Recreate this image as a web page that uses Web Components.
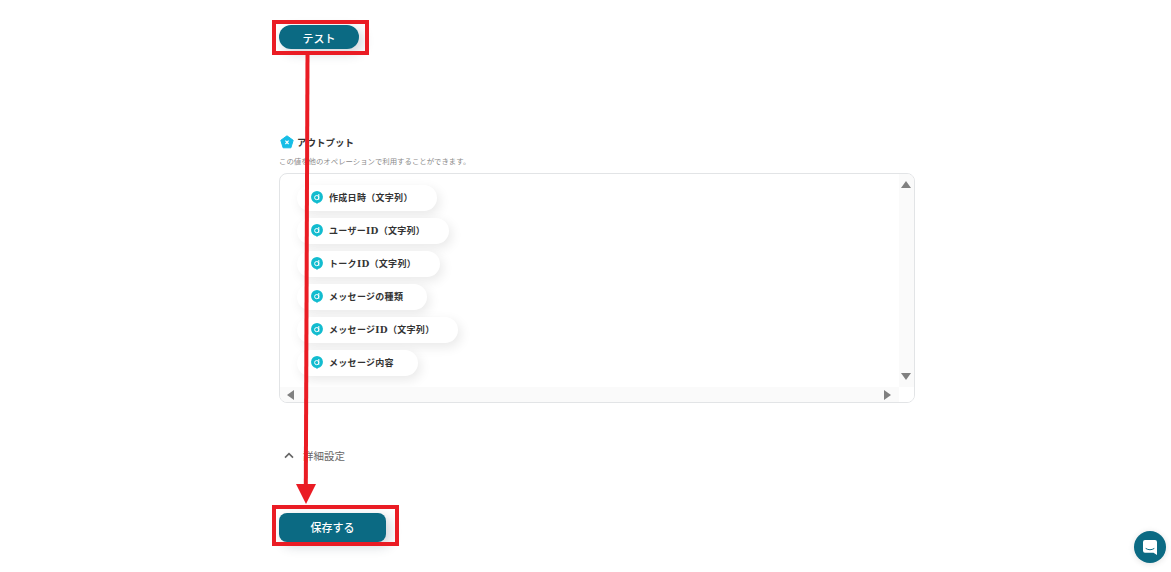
<!DOCTYPE html>
<html lang="ja">
<head>
<meta charset="utf-8">
<title>アウトプット</title>
<style>
    html, body { margin: 0; height: 100%; background: #fff; }
    body { font-family: "Noto Sans CJK JP", "Noto Sans", sans-serif; overflow: hidden; }
</style>
</head>
<body>
<flow-page>
    <action-button shape="pill" style="--w:80px;--h:24px;--fs:11px;--pt:2px;--pb:0px;font-weight:500">テスト</action-button>
    <output-section>
        <output-chip>作成日時（文字列）</output-chip>
        <output-chip>ユーザーID（文字列）</output-chip>
        <output-chip>トークID（文字列）</output-chip>
        <output-chip>メッセージの種類</output-chip>
        <output-chip>メッセージID（文字列）</output-chip>
        <output-chip>メッセージ内容</output-chip>
    </output-section>
    <detail-toggle>詳細設定</detail-toggle>
    <action-button style="--w:107px;--h:29px;--fs:11px;--pt:0px;--pb:2px;font-weight:500">保存する</action-button>
</flow-page>
<red-annotation></red-annotation>
<chat-launcher></chat-launcher>

<script>
// Boton principal (pill o rectangular)
class ActionButton extends HTMLElement {
    constructor() {
        super();
        this.attachShadow({ mode: 'open' }).innerHTML = `
            <style>
                :host { display: block; width: var(--w); }
                button {
                    display: flex; align-items: center; justify-content: center;
                    box-sizing: border-box; width: 100%; height: var(--h);
                    padding: var(--pt) 0 var(--pb); border: 0;
                    border-radius: 8px; background: #0b6a83; color: #fff;
                    font: inherit; font-size: var(--fs);
                    box-shadow: 4px 4px 12px rgba(40, 60, 80, .22);
                }
                :host([shape="pill"]) button { border-radius: 12px; }
            </style>
            <button><slot></slot></button>
        `;
    }
}

// Contenedor de la pagina
class FlowPage extends HTMLElement {
    constructor() {
        super();
        this.attachShadow({ mode: 'open' }).innerHTML = `
            <style>
                :host {
                    display: flex; flex-direction: column;
                    width: 636px; margin-left: 279px; padding-top: 25px;
                }
                ::slotted(output-section) { margin-top: 85px; }
                ::slotted(detail-toggle) { margin-top: 43px; }
                ::slotted(action-button:last-child) { margin-top: 49px; }
            </style>
            <slot></slot>
        `;
    }
}

// Seccion de salida con titulo y caja con scroll
class OutputSection extends HTMLElement {
    constructor() {
        super();
        this.attachShadow({ mode: 'open' }).innerHTML = `
            <style>
                :host { display: block; }
                h2 {
                    display: flex; align-items: center; gap: 3px; margin: 0; padding-left: 1px;
                    height: 16px; font-size: 9.5px; font-weight: 700; color: #333;
                }
                svg { display: block; }
                p { margin: 4px 0 0; height: 14px; line-height: 14px; font-size: 7.4px; color: #8a8a8a; }
                .box {
                    position: relative; box-sizing: border-box; height: 230px; margin-top: 5px;
                    border: 1px solid #e2e4e6; border-radius: 8px; overflow: hidden;
                    display: grid; grid-template-columns: 1fr 15px; grid-template-rows: 1fr 15px;
                }
                .list { display: flex; flex-direction: column; gap: 7px; padding: 11px 0 0 17px; }
                .vbar, .hbar { background: #fafafa; display: flex; justify-content: space-between; align-items: center; }
                .vbar { flex-direction: column; padding: 7px 1px 7px 0; }
                .hbar { padding: 0 8px 0 7px; }
                .corner { background: #fff; }
                i { display: block; width: 0; height: 0; border: solid transparent; }
                .up { border-width: 0 5px 7px; border-bottom-color: #808080; }
                .down { border-width: 7px 5px 0; border-top-color: #808080; }
                .left { border-width: 5px 7px 5px 0; border-right-color: #808080; }
                .right { border-width: 5px 0 5px 7px; border-left-color: #808080; }
            </style>
            <h2>
                <svg width="14" height="14" viewBox="0 0 14 14">
                    <path d="M7 .8 13.2 5.3 10.9 12.8H3.1L.8 5.3Z" fill="#16bde6" stroke="#16bde6" stroke-linejoin="round"/>
                    <path d="M5.4 5.6 8.6 9M8.6 5.6 5.4 9" stroke="#fff" stroke-width="1.1" fill="none"/>
                </svg>
                アウトプット
            </h2>
            <p>この値を他のオペレーションで利用することができます。</p>
            <div class="box">
                <div class="list"><slot></slot></div>
                <div class="vbar"><i class="up"></i><i class="down"></i></div>
                <div class="hbar"><i class="left"></i><i class="right"></i></div>
                <div class="corner"></div>
            </div>
        `;
    }
}

// Chip de cada dato de salida
class OutputChip extends HTMLElement {
    constructor() {
        super();
        this.attachShadow({ mode: 'open' }).innerHTML = `
            <style>
                :host {
                    display: flex; align-items: center; gap: 6px; align-self: flex-start;
                    box-sizing: border-box; height: 26px; padding: 0 24px 2px 14px; border-radius: 13px;
                    background: #fff; box-shadow: 3px 4px 12px rgba(0, 0, 0, .09);
                    font-family: "DejaVu Serif", "Noto Sans CJK JP", serif;
                    font-size: 9px; letter-spacing: .3px; font-weight: 700; color: #333; white-space: nowrap;
                }
                svg { display: block; flex: none; }
            </style>
            <svg width="12" height="13" viewBox="0 0 12 13">
                <path d="M6 0a6 6 0 0 1 1 11.9L6 13l-1-1.1A6 6 0 0 1 6 0Z" fill="#12bccf"/>
                <circle cx="5.7" cy="6.6" r="2.1" fill="none" stroke="#fff" stroke-width="1"/>
                <path d="M7.8 3v5.8" stroke="#fff" stroke-width="1"/>
            </svg>
            <slot></slot>
        `;
    }
}

// Fila plegable de ajustes
class DetailToggle extends HTMLElement {
    constructor() {
        super();
        this.attachShadow({ mode: 'open' }).innerHTML = `
            <style>
                :host {
                    display: flex; align-items: center; gap: 9px; height: 18px; padding-left: 5px;
                    font-size: 10.5px; color: #666;
                }
                svg { display: block; }
            </style>
            <svg width="10" height="7" viewBox="0 0 10 7">
                <path d="M1 5.6 5 1.6 9 5.6" fill="none" stroke="#666" stroke-width="1.6"/>
            </svg>
            <slot></slot>
        `;
    }
}

// Anotaciones rojas encima de la captura
class RedAnnotation extends HTMLElement {
    constructor() {
        super();
        this.attachShadow({ mode: 'open' }).innerHTML = `
            <style>
                :host { position: absolute; inset: 0; pointer-events: none; }
                .frame { position: absolute; box-sizing: border-box; border: 4px solid #ea1c24; }
                svg { position: absolute; left: 0; top: 0; }
            </style>
            <div class="frame" style="left:272px;top:20px;width:97px;height:35px"></div>
            <div class="frame" style="left:272px;top:505px;width:127px;height:41px"></div>
            <svg width="400" height="520" viewBox="0 0 400 520">
                <path d="M307.5 55 305.8 490" stroke="#ea1c24" stroke-width="4" fill="none"/>
                <path d="M296 484H316L306 504Z" fill="#ea1c24"/>
            </svg>
        `;
    }
}

// Boton flotante del chat
class ChatLauncher extends HTMLElement {
    constructor() {
        super();
        this.attachShadow({ mode: 'open' }).innerHTML = `
            <style>
                :host {
                    position: fixed; right: 5px; bottom: 9px; width: 32px; height: 32px;
                    border-radius: 50%; background: #0b6a83;
                    display: flex; align-items: center; justify-content: center;
                    box-shadow: 0 1px 6px rgba(0, 0, 0, .12);
                }
                svg { display: block; }
            </style>
            <svg width="16" height="17" viewBox="0 0 16 17">
                <path d="M3 1h10a2 2 0 0 1 2 2v13l-3.5-2.2H3a2 2 0 0 1-2-2V3a2 2 0 0 1 2-2Z" fill="#fff"/>
                <path d="M4 9.6c2.4 1.6 5.6 1.6 8 0" fill="none" stroke="#0b6a83" stroke-width="1" stroke-linecap="round"/>
            </svg>
        `;
    }
}

customElements.define('action-button', ActionButton);
customElements.define('flow-page', FlowPage);
customElements.define('output-section', OutputSection);
customElements.define('output-chip', OutputChip);
customElements.define('detail-toggle', DetailToggle);
customElements.define('red-annotation', RedAnnotation);
customElements.define('chat-launcher', ChatLauncher);
</script>
</body>
</html>
